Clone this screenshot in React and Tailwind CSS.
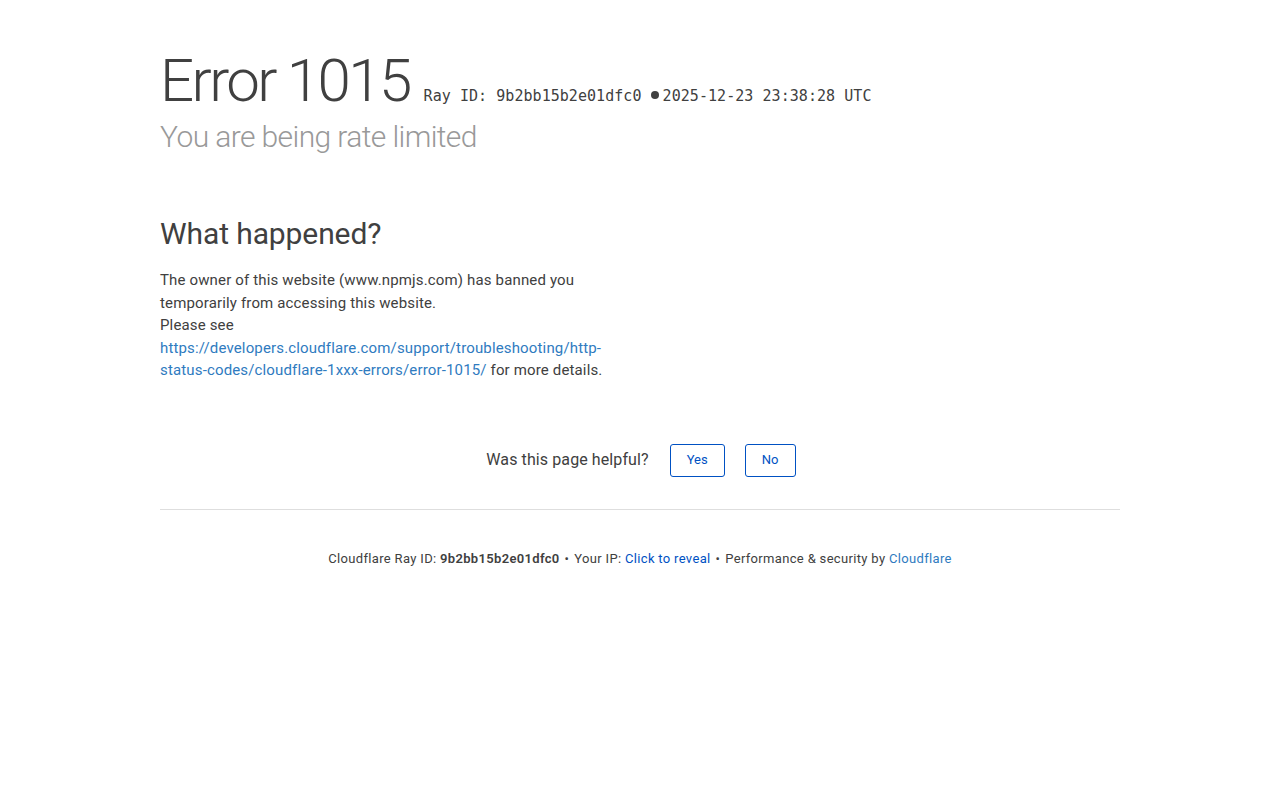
import React from 'react';

const App = () => {
  return (
    <div className="min-h-[800px] bg-white text-[#404040] font-['Roboto','Noto_Sans',sans-serif]">
      <div className="mx-auto w-[960px] pt-[45px]">
        <div className="flex items-baseline">
          <h1 className="text-[60px] font-light leading-[72px] tracking-[-2.6px]">Error 1015</h1>
          <span className="ml-[14px] font-['DejaVu_Sans_Mono',monospace] text-[15px] leading-[20px] tracking-[0.05px]">
            Ray ID: 9b2bb15b2e01dfc0 <span className="mr-[4px] inline-block h-[8px] w-[8px] -translate-y-[2px] rounded-full bg-[#404040]"></span>2025-12-23 23:38:28 UTC
          </span>
        </div>
        <h2 className="mt-[2px] text-[30px] font-light leading-[36px] tracking-[-0.6px] text-[#999]">You are being rate limited</h2>

        <div className="mt-[61px] w-[450px]">
          <h2 className="text-[30px] font-normal leading-[36px] tracking-[-0.1px]">What happened?</h2>
          <p className="mt-[17px] text-[15px] leading-[22.5px] tracking-[0.15px]">
            The owner of this website (www.npmjs.com) has banned you temporarily from accessing this website.
            <br />
            Please see{' '}
            <a className="text-[#2f7bbf]" href="#">
              https://developers.cloudflare.com/support/troubleshooting/http-status-codes/cloudflare-1xxx-errors/error-1015/
            </a>{' '}
            for more details.
          </p>
        </div>

        <div className="mt-[62px] flex items-center justify-center pl-[2px]">
          <span className="text-[16px] tracking-[0.1px]">Was this page helpful?</span>
          <button className="ml-[21px] h-[33px] w-[55px] rounded-[3px] border border-[#0051c3] text-[13px] text-[#0051c3]">Yes</button>
          <button className="ml-[20px] h-[33px] w-[51px] rounded-[3px] border border-[#0051c3] text-[13px] text-[#0051c3]">No</button>
        </div>

        <div className="mt-[32px] border-t border-[#dedede] pt-[39px] text-center text-[13px] tracking-[0.33px]">
          Cloudflare Ray ID: <strong className="font-semibold">9b2bb15b2e01dfc0</strong>
          <span className="mx-[5px]">&bull;</span>
          Your IP: <a className="text-[#0051c3]" href="#">Click to reveal</a>
          <span className="mx-[5px]">&bull;</span>
          Performance &amp; security by <a className="text-[#2f7bbf]" href="#">Cloudflare</a>
        </div>
      </div>
    </div>
  );
};

export default App;
